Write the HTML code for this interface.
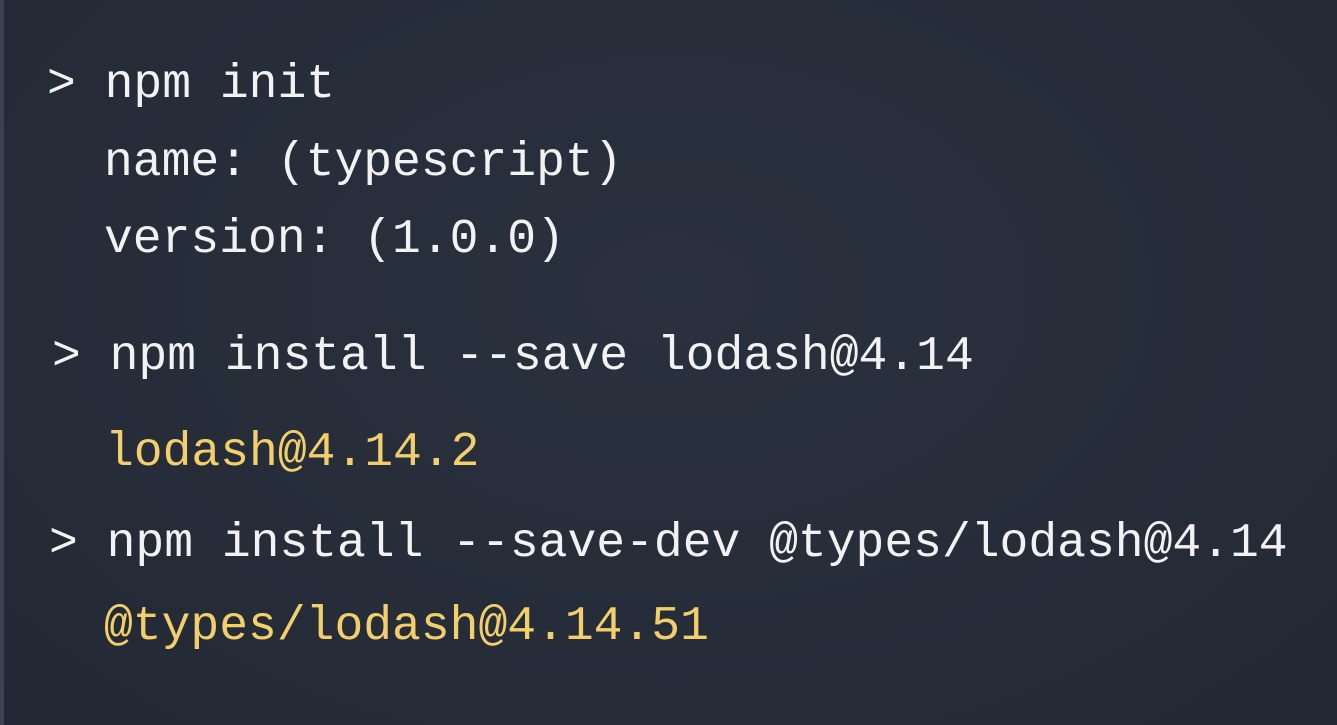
<!DOCTYPE html>
<html><head><meta charset="utf-8"><style>
html,body{margin:0;padding:0}
body{width:1337px;height:725px;overflow:hidden;position:relative;background:#262d39;
background-image:radial-gradient(ellipse at 50% 40%,#2a313e 0%,#252c38 70%,#222834 100%);
font-family:"Liberation Mono",monospace;font-size:48px;line-height:48px;color:#f2f2f2}
.strip{position:absolute;left:0;top:0;width:4px;height:725px;background:#3b4351}
.l{position:absolute;white-space:pre}
.y{color:#f3cf6b}
</style></head><body>
<div class="strip"></div>
<div class="l" style="left:47px;top:61px">&gt; npm init</div>
<div class="l" style="left:104px;top:139px">name: (typescript)</div>
<div class="l" style="left:104px;top:216px">version: (1.0.0)</div>
<div class="l" style="left:52px;top:333px">&gt; npm install --save lodash@4.14</div>
<div class="l y" style="left:105px;top:429px">lodash@4.14.2</div>
<div class="l" style="left:49px;top:520px">&gt; npm install --save-dev @types/lodash@4.14</div>
<div class="l y" style="left:104px;top:603px">@types/lodash@4.14.51</div>
</body></html>
